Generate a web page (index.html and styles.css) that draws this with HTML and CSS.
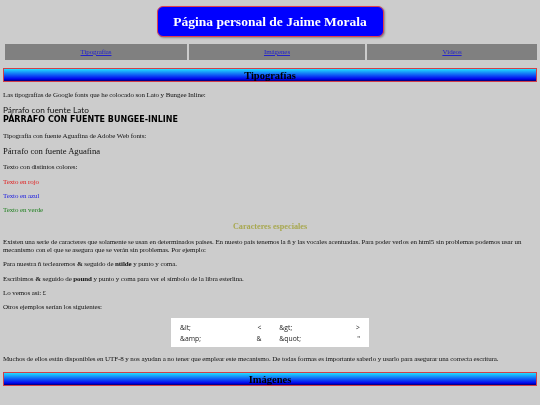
FILE: index.html
```html
<!DOCTYPE html>
<html lang="es">
<head>
  <meta charset="UTF-8" />
  <title>Página personal de Jaime Morala</title>
  <link rel="stylesheet" href="styles.css">
</head>
<body>
  <header class="cabecera">
    <h1>Página personal de Jaime Morala</h1>
  </header>

  <nav class="menu">
    <div class="menu-item menu-a"><a href="#tipografias">Tipografías</a></div>
    <div class="menu-item menu-b"><a href="#imagenes">Imágenes</a></div>
    <div class="menu-item menu-c"><a href="#videos">Vídeos</a></div>
  </nav>

  <section id="tipografias">
    <h2>Tipografías</h2>
    <p>Las tipografías de Google fonts que he colocado son Lato y Bungee Inline:</p>
    <div class="muestras">
      <div class="lato">Párrafo con fuente Lato</div>
      <div class="bungee">Párrafo con fuente Bungee-Inline</div>
    </div>
    <p>Tipografía con fuente Aguafina de Adobe Web fonts:</p>
    <p class="aguafina">Párrafo con fuente Aguafina</p>
    <p>Texto con distintos colores:</p>
    <p class="rojo">Texto en rojo</p>
    <p class="azul">Texto en azul</p>
    <p class="verde">Texto en verde</p>

    <h3>Caracteres especiales</h3>
    <p>Existen una serie de caracteres que solamente se usan en determinados países. En nuesto país tenemos la ñ y las vocales acentuadas. Para poder verlos en html5 sin problemas podemos usar un mecanismo con el que se asegura que se verán sin problemas. Por ejemplo:</p>
    <p>Para nuestra ñ teclearemos <b>&amp;</b> seguido de <b>ntilde</b> y punto y coma.</p>
    <p>Escribimos <b>&amp;</b> seguido de <b>pound</b> y punto y coma para ver el símbolo de la libra esterlina.</p>
    <p>Lo vemos así: £</p>
    <p>Otros ejemplos serían los siguientes:</p>

    <table class="entidades">
      <tr><td>&amp;lt;</td><td>&lt;</td><td>&amp;gt;</td><td>&gt;</td></tr>
      <tr><td>&amp;amp;</td><td>&amp;</td><td>&amp;quot;</td><td>"</td></tr>
    </table>

    <p>Muchos de ellos están disponibles en UTF-8 y nos ayudan a no tener que emplear este mecanismo. De todas formas es importante saberlo y usarlo para asegurar una correcta escritura.</p>
  </section>

  <section id="imagenes">
    <h2>Imágenes</h2>
  </section>
</body>
</html>
```

FILE: styles.css
```css
* {
  box-sizing: border-box;
}
html, body {
  margin: 0;
  padding: 0;
}
body {
  background: #cccccc;
  color: #111111;
  font-family: "Liberation Serif", serif;
  font-size: 7px;
  letter-spacing: -0.1px;
  line-height: 8px;
  padding: 6px 3px 0;
  filter: blur(0.3px);
}
.cabecera {
  display: flex;
  justify-content: center;
}
h1 {
  margin: 0;
  width: 227px;
  height: 31px;
  line-height: 30px;
  letter-spacing: 0;
  text-align: center;
  color: #ffffff;
  background: #0000ff;
  font-size: 13.5px;
  border: 1px solid #e04050;
  border-radius: 6px;
  box-shadow: 1px 1px 2px #888888;
}
.menu {
  display: flex;
  gap: 2px;
  margin: 7px 0 8px 2px;
}
.menu-item {
  background: #808080;
  height: 16px;
  line-height: 16px;
  text-align: center;
}
.menu-a {
  width: 182px;
}
.menu-b {
  width: 176px;
}
.menu-c {
  width: 170px;
}
.menu a {
  color: #2222cc;
}
h2 {
  margin: 0;
  height: 14px;
  line-height: 13px;
  letter-spacing: 0;
  text-align: center;
  font-size: 10.5px;
  color: #000000;
  border: 1px solid #d0404a;
  background: linear-gradient(#22ddff, #0000ee 85%, #000066);
}
p {
  margin: 6.2px 0;
}
#tipografias > h2 + p {
  margin-top: 9px;
}
.muestras {
  margin: 6px 0 7px;
}
.lato {
  font-family: Lato, sans-serif;
  font-size: 8.3px;
  letter-spacing: 0;
  line-height: 10px;
}
.bungee {
  font-family: "DejaVu Sans", sans-serif;
  font-weight: bold;
  font-size: 8px;
  letter-spacing: 0;
  line-height: 10px;
  text-transform: uppercase;
  color: #000000;
}
.aguafina {
  font-size: 8.6px;
  letter-spacing: 0;
  line-height: 10px;
  margin-bottom: 7px;
}
.rojo {
  color: #e02020;
}
.azul {
  color: #2020e0;
}
.verde {
  color: #208020;
}
h3 {
  margin: 8px 0 6px;
  text-align: center;
  font-size: 8.2px;
  letter-spacing: 0;
  line-height: 10px;
  color: #a8a850;
}
.entidades {
  margin: 7px auto 8px;
  width: 198px;
  background: #ffffff;
  border-collapse: collapse;
  font-family: "Open Sans", sans-serif;
  font-size: 6.8px;
  letter-spacing: 0;
  line-height: 11px;
  color: #222222;
}
.entidades td {
  padding: 0 9px;
}
.entidades tr:first-child td {
  padding-top: 4px;
}
.entidades tr:last-child td {
  padding-bottom: 3px;
}
.entidades td:nth-child(2), .entidades td:nth-child(4) {
  text-align: right;
}
#imagenes {
  margin-top: 9px;
}
```
